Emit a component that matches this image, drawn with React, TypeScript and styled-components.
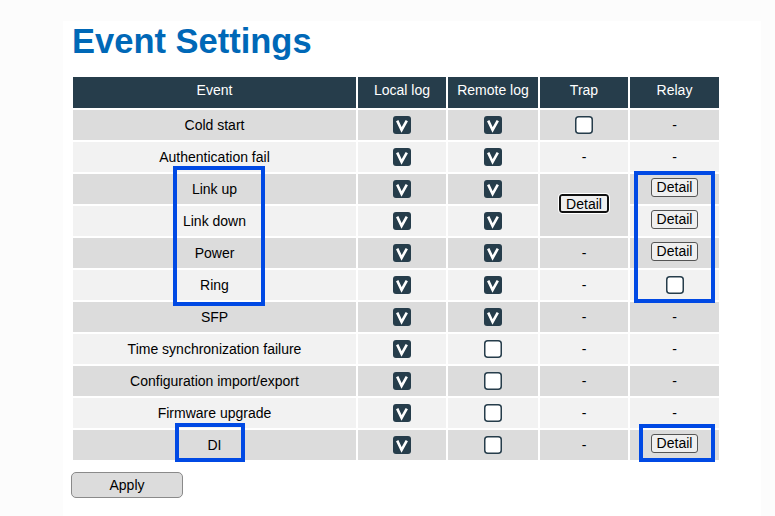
import React from 'react';
import styled, { createGlobalStyle } from 'styled-components';

const GlobalStyle = createGlobalStyle`
  html, body {
    margin: 0;
    padding: 0;
    background: #fcfcfc;
    font-family: "Liberation Sans", Arial, sans-serif;
  }
`;

const Page = styled.div`
  position: relative;
  width: 775px;
  height: 516px;
  overflow: hidden;
`;

const Panel = styled.div`
  margin: 21px 0 0 63px;
  width: 698px;
  height: 495px;
  background: #fff;
  padding: 0 0 0 9px;
  box-sizing: border-box;
`;

const Title = styled.h1`
  margin: 1px 0 0 0;
  font-size: 34.5px;
  line-height: 40px;
  font-weight: bold;
  color: #0068b7;
`;

const Table = styled.table`
  margin: 14px 0 0 -1px;
  border-collapse: collapse;
  table-layout: fixed;
  font-size: 14px;
`;

const Th = styled.th<{ $w: number }>`
  width: ${({ $w }) => $w}px;
  height: 25px;
  padding: 0 0 6px 0;
  border: 2px solid #fff;
  background: #263d4b;
  color: #fff;
  font-weight: normal;
  text-align: center;
  vertical-align: middle;
`;

const Td = styled.td<{ $shade: boolean }>`
  height: 30px;
  padding: 0;
  border: 2px solid #fff;
  background: ${({ $shade }) => ($shade ? '#dcdcdc' : '#f2f2f2')};
  color: #000;
  text-align: center;
  vertical-align: middle;
`;

const Box = styled.span`
  display: inline-block;
  width: 18px;
  height: 18px;
  vertical-align: middle;
  line-height: 0;
`;

const DetailButton = styled.button<{ $focused?: boolean }>`
  font-family: "Liberation Sans", Arial, sans-serif;
  font-size: 14px;
  line-height: 16px;
  padding: 0 5px;
  height: 19px;
  margin-bottom: 4px;
  background: #efefef;
  color: #000;
  border: ${({ $focused }) => ($focused ? '2px solid #111' : '1px solid #555')};
  border-radius: 3px;
  outline: ${({ $focused }) => ($focused ? '1px solid #fff' : 'none')};
  vertical-align: middle;
`;

const ApplyButton = styled.button`
  margin-top: 10px;
  width: 112px;
  height: 26px;
  font-family: "Liberation Sans", Arial, sans-serif;
  font-size: 14px;
  color: #000;
  background: #dcdcdc;
  border: 1px solid #8a8a8a;
  border-radius: 5px;
  display: block;
  margin-left: -1px;
`;

const Mark = styled.div<{ $l: number; $t: number; $w: number; $h: number }>`
  position: absolute;
  left: ${({ $l }) => $l}px;
  top: ${({ $t }) => $t}px;
  width: ${({ $w }) => $w}px;
  height: ${({ $h }) => $h}px;
  border: 4px solid #0049e4;
  box-sizing: border-box;
  pointer-events: none;
`;

type Cell = 'on' | 'off' | '-' | 'detail' | 'focus' | 'skip';

const Checked = () => (
  <Box>
    <svg width="18" height="18" viewBox="0 0 18 18">
      <rect x="0" y="0" width="18" height="18" rx="3" fill="#263d4b" />
      <path d="M4.2 4.6 L8.6 14 L13.8 4.6" fill="none" stroke="#fff" strokeWidth="2.6" strokeLinejoin="miter" />
    </svg>
  </Box>
);

const Unchecked = () => (
  <Box>
    <svg width="18" height="18" viewBox="0 0 18 18">
      <rect x="0.75" y="0.75" width="16.5" height="16.5" rx="3" fill="#fff" stroke="#263d4b" strokeWidth="1.5" />
    </svg>
  </Box>
);

const renderCell = (c: Cell) => {
  if (c === 'on') return <Checked />;
  if (c === 'off') return <Unchecked />;
  if (c === 'detail') return <DetailButton>Detail</DetailButton>;
  if (c === 'focus') return <DetailButton $focused>Detail</DetailButton>;
  return '-';
};

const rows: [string, Cell, Cell, Cell, Cell][] = [
  ['Cold start', 'on', 'on', 'off', '-'],
  ['Authentication fail', 'on', 'on', '-', '-'],
  ['Link up', 'on', 'on', 'focus', 'detail'],
  ['Link down', 'on', 'on', 'skip', 'detail'],
  ['Power', 'on', 'on', '-', 'detail'],
  ['Ring', 'on', 'on', '-', 'off'],
  ['SFP', 'on', 'on', '-', '-'],
  ['Time synchronization failure', 'on', 'off', '-', '-'],
  ['Configuration import/export', 'on', 'off', '-', '-'],
  ['Firmware upgrade', 'on', 'off', '-', '-'],
  ['DI', 'on', 'off', '-', 'detail'],
];

export default function App() {
  return (
    <Page>
      <GlobalStyle />
      <Panel>
        <Title>Event Settings</Title>
        <Table>
          <thead>
            <tr>
              <Th $w={283}>Event</Th>
              <Th $w={88}>Local log</Th>
              <Th $w={90}>Remote log</Th>
              <Th $w={88}>Trap</Th>
              <Th $w={89}>Relay</Th>
            </tr>
          </thead>
          <tbody>
            {rows.map(([name, local, remote, trap, relay], i) => {
              const shade = i % 2 === 0;
              return (
                <tr key={name}>
                  <Td $shade={shade}>{name}</Td>
                  <Td $shade={shade}>{renderCell(local)}</Td>
                  <Td $shade={shade}>{renderCell(remote)}</Td>
                  {trap !== 'skip' && (
                    <Td $shade={shade} rowSpan={trap === 'focus' ? 2 : 1}>
                      {renderCell(trap)}
                    </Td>
                  )}
                  <Td $shade={shade}>{renderCell(relay)}</Td>
                </tr>
              );
            })}
          </tbody>
        </Table>
        <ApplyButton>Apply</ApplyButton>
      </Panel>
      <Mark $l={173} $t={166} $w={92} $h={140} />
      <Mark $l={634} $t={171} $w={81} $h={132} />
      <Mark $l={175} $t={423} $w={70} $h={39} />
      <Mark $l={639} $t={424} $w={76} $h={38} />
    </Page>
  );
}
